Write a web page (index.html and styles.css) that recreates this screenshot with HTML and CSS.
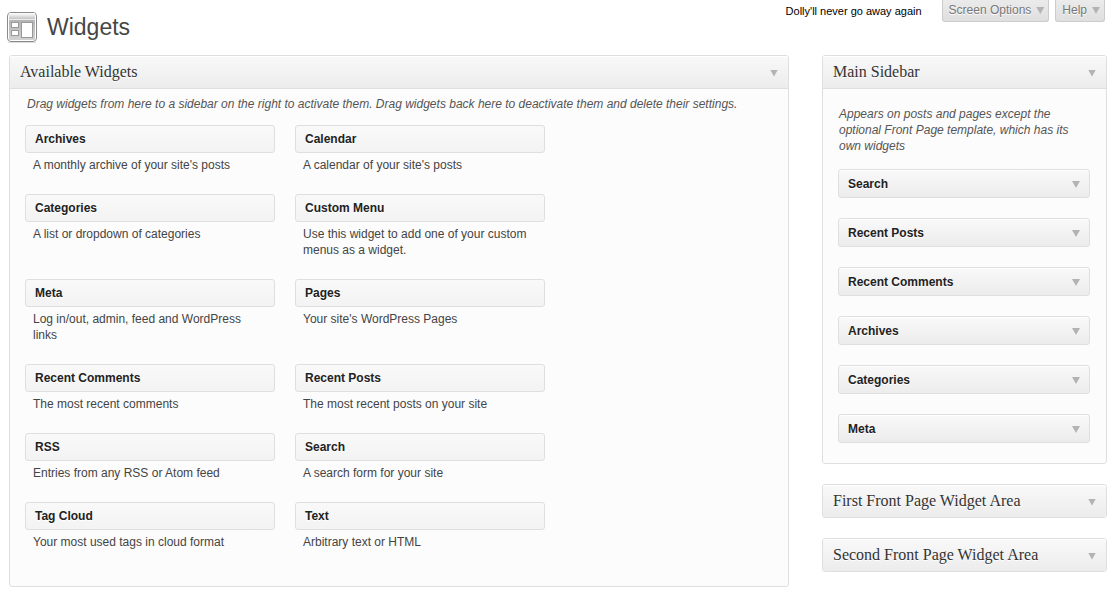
FILE: index.html
```html
<!DOCTYPE html>
<html lang="en">
<head>
<meta charset="utf-8">
<title>Widgets</title>
<link rel="stylesheet" href="styles.css">
</head>
<body>
<header class="topbar">
  <div class="title">
    <svg class="title-icon" width="32" height="32" viewBox="0 0 32 32" aria-hidden="true">
      <defs>
        <linearGradient id="lid" x1="0" y1="0" x2="0" y2="1"><stop offset="0" stop-color="#fff"/><stop offset="1" stop-color="#c4c4c4"/></linearGradient>
        <linearGradient id="frame" x1="0" y1="0" x2="0" y2="1"><stop offset="0" stop-color="#b4b4b4"/><stop offset="1" stop-color="#d2d2d2"/></linearGradient>
      </defs>
      <path d="M2 31.500h28" stroke="#ddd"/>
      <rect x="1.500" y="1.500" width="29" height="29" rx="3.500" fill="#fff" stroke="#8a8a8a"/>
      <rect x="3" y="2" width="26" height="6" fill="url(#lid)"/>
      <rect x="3" y="8" width="26" height="1" fill="#ebebeb"/>
      <rect x="3" y="9" width="26" height="20" rx="1" fill="url(#frame)"/>
      <g fill="#fff" stroke="#999">
        <rect x="5.500" y="11.500" width="7" height="5"/>
        <rect x="5.500" y="19.500" width="7" height="5"/>
        <rect x="15.500" y="11.500" width="11" height="15"/>
      </g>
    </svg>
    <h1>Widgets</h1>
  </div>
  <p class="lyric">Dolly'll never go away again</p>
  <nav class="tabs">
    <button class="tab" type="button">Screen Options<span class="arrow"></span></button>
    <button class="tab" type="button">Help<span class="arrow"></span></button>
  </nav>
</header>
<div class="columns">
  <main class="panel">
    <h2><button class="bar" type="button">Available Widgets<span class="arrow"></span></button></h2>
    <div class="available">
      <p class="hint">Drag widgets from here to a sidebar on the right to activate them. Drag widgets back here to deactivate them and delete their settings.</p>
      <div class="grid">
        <section><h3>Archives</h3><p>A monthly archive of your site's posts</p></section>
        <section><h3>Calendar</h3><p>A calendar of your site's posts</p></section>
        <section><h3>Categories</h3><p>A list or dropdown of categories</p></section>
        <section><h3>Custom Menu</h3><p>Use this widget to add one of your custom menus as a widget.</p></section>
        <section><h3>Meta</h3><p>Log in/out, admin, feed and WordPress links</p></section>
        <section><h3>Pages</h3><p>Your site's WordPress Pages</p></section>
        <section><h3>Recent Comments</h3><p>The most recent comments</p></section>
        <section><h3>Recent Posts</h3><p>The most recent posts on your site</p></section>
        <section><h3>RSS</h3><p>Entries from any RSS or Atom feed</p></section>
        <section><h3>Search</h3><p>A search form for your site</p></section>
        <section><h3>Tag Cloud</h3><p>Your most used tags in cloud format</p></section>
        <section><h3>Text</h3><p>Arbitrary text or HTML</p></section>
      </div>
    </div>
  </main>
  <aside class="areas">
    <section class="panel">
      <h2><button class="bar" type="button">Main Sidebar<span class="arrow"></span></button></h2>
      <div class="assigned">
        <p class="hint">Appears on posts and pages except the optional Front Page template, which has its own widgets</p>
        <button class="widget" type="button">Search<span class="arrow"></span></button>
        <button class="widget" type="button">Recent Posts<span class="arrow"></span></button>
        <button class="widget" type="button">Recent Comments<span class="arrow"></span></button>
        <button class="widget" type="button">Archives<span class="arrow"></span></button>
        <button class="widget" type="button">Categories<span class="arrow"></span></button>
        <button class="widget" type="button">Meta<span class="arrow"></span></button>
      </div>
    </section>
    <section class="panel closed"><h2><button class="bar" type="button">First Front Page Widget Area<span class="arrow"></span></button></h2></section>
    <section class="panel closed"><h2><button class="bar" type="button">Second Front Page Widget Area<span class="arrow"></span></button></h2></section>
  </aside>
</div>
</body>
</html>
```
FILE: styles.css
```css
* { box-sizing: border-box; }
body { margin: 0; background: #fff; color: #444; font: 12px/16px "Liberation Sans", Arial, sans-serif; }
h1, h2, h3, p { margin: 0; }
button { font: inherit; text-align: left; cursor: pointer; }

.arrow { flex: none; width: 8px; height: 7px; margin-top: 2px; background: #b3b3b3; clip-path: polygon(0 0, 100% 0, 50% 100%); }

.topbar { display: flex; align-items: flex-start; padding: 0 15px 0 6px; height: 55px; }
.title { display: flex; align-items: center; gap: 9px; flex: 1; padding-top: 11px; }
.title-icon { display: block; }
h1 { font-size: 23px; font-weight: 400; line-height: 32px; color: #464646; }
.lyric { font-size: 11px; color: #000; padding: 3px 20px 0 0; }
.tabs { display: flex; gap: 6px; }
.tab { display: flex; align-items: center; gap: 5px; height: 22px; padding: 0 4px 2px 6px; border: 1px solid #ccc; border-top: 0; border-radius: 0 0 3px 3px; background: linear-gradient(#ebebeb, #dfdfdf); color: #777; text-shadow: 0 1px 0 #fff; }

.columns { display: flex; align-items: flex-start; gap: 33px; padding: 0 13px 14px 9px; }
.panel { border: 1px solid #dfdfdf; border-radius: 3px; background: #fcfcfc; }
main.panel { flex: 1; min-width: 0; }
.areas { flex: none; width: 285px; display: flex; flex-direction: column; gap: 20px; }

.bar, .widget { display: flex; align-items: center; justify-content: space-between; width: 100%; border: 0; background: linear-gradient(#f9f9f9, #ececec); box-shadow: inset 0 1px 0 #fff; text-shadow: 0 1px 0 #fff; }
h2 { font-weight: 400; }
.bar { height: 33px; padding: 0 10px; border-bottom: 1px solid #dfdfdf; border-radius: 3px 3px 0 0; color: #333; font: 16px/20px Georgia, "Liberation Serif", serif; }
.closed .bar { height: 32px; border-bottom: 0; border-radius: 3px; }

.hint { color: #555; font-style: italic; }
.available { padding: 7px 15px 15px; }
.available .hint { padding: 0 2px; }
.grid { display: grid; grid-template-columns: 250px 250px; column-gap: 20px; padding-top: 13px; }
.grid section { padding-bottom: 21px; }
.grid h3 { height: 28px; padding: 5px 9px; border: 1px solid #dfdfdf; border-radius: 3px; background: linear-gradient(#f9f9f9, #f3f3f3); color: #222; font-size: 12px; line-height: 16px; text-shadow: 0 1px 0 #fff; }
.grid p { padding: 4px 8px 0; }

.assigned { display: flex; flex-direction: column; gap: 20px; padding: 17px 16px 20px 15px; }
.assigned .hint { padding: 0 16px 0 1px; margin-bottom: -5px; }
.widget { height: 29px; padding: 0 9px; border: 1px solid #dfdfdf; border-radius: 3px; color: #222; font-weight: 700; }
```
